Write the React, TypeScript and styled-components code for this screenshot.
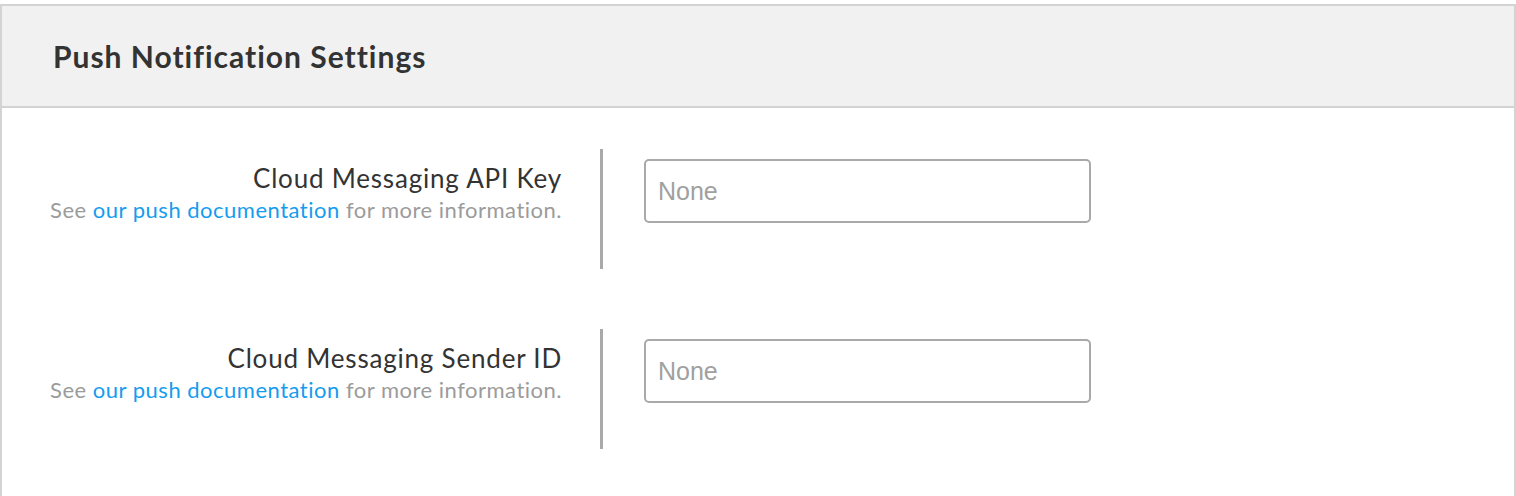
import styled, { createGlobalStyle } from 'styled-components';

const GlobalStyle = createGlobalStyle`
  html, body {
    margin: 0;
    padding: 0;
    background: #fff;
  }
  body {
    font-family: Lato, 'Noto Sans', sans-serif;
  }
`;

const fields = [
  { id: 'apiKey', label: 'Cloud Messaging API Key' },
  { id: 'senderId', label: 'Cloud Messaging Sender ID' },
];

const Page = styled.div`
  padding-top: 4px;
  height: 496px;
  box-sizing: border-box;
  overflow: hidden;
`;

const Panel = styled.section`
  border-left: 2px solid #d3d3d3;
  border-right: 2px solid #d3d3d3;
  min-height: 600px;
`;

const PanelHeader = styled.header`
  height: 100px;
  display: flex;
  align-items: center;
  padding-left: 51px;
  background: #f1f1f1;
  border-top: 2px solid #d3d3d3;
  border-bottom: 2px solid #d3d3d3;
`;

const Title = styled.h2`
  margin: 0;
  font-size: 30px;
  line-height: 36px;
  font-weight: 700;
  color: #333;
  letter-spacing: 1px;
`;

const PanelBody = styled.div`
  padding-top: 41px;
  display: flex;
  flex-direction: column;
  gap: 60px;
`;

const Row = styled.div`
  display: flex;
  height: 120px;
`;

const LabelCell = styled.div`
  width: 601px;
  box-sizing: border-box;
  padding: 13px 38px 0 0;
  border-right: 3px solid #a9a9a9;
  text-align: right;
`;

const Label = styled.div`
  font-size: 26px;
  line-height: 32px;
  color: #333;
  letter-spacing: 0.8px;
`;

const Help = styled.div`
  margin-top: 3px;
  font-size: 22px;
  line-height: 26px;
  color: #9b9b9b;
  letter-spacing: 0.5px;
`;

const DocLink = styled.a`
  color: #169cee;
  text-decoration: none;
`;

const InputCell = styled.div`
  padding: 10px 0 0 41px;
`;

const TextInput = styled.input`
  width: 447px;
  height: 64px;
  box-sizing: border-box;
  border: 2px solid #a9a9a9;
  border-radius: 5px;
  padding: 0 12px;
  font-family: 'Liberation Sans', Arial, sans-serif;
  font-size: 25px;
  color: #333;
  outline: none;
  &::placeholder {
    color: #a0a0a0;
  }
`;

export default function App() {
  return (
    <Page>
      <GlobalStyle />
      <Panel>
        <PanelHeader>
          <Title>Push Notification Settings</Title>
        </PanelHeader>
        <PanelBody>
          {fields.map((f) => (
            <Row key={f.id}>
              <LabelCell>
                <Label>{f.label}</Label>
                <Help>
                  See <DocLink href="#">our push documentation</DocLink> for more
                  information.
                </Help>
              </LabelCell>
              <InputCell>
                <TextInput placeholder="None" />
              </InputCell>
            </Row>
          ))}
        </PanelBody>
      </Panel>
    </Page>
  );
}
